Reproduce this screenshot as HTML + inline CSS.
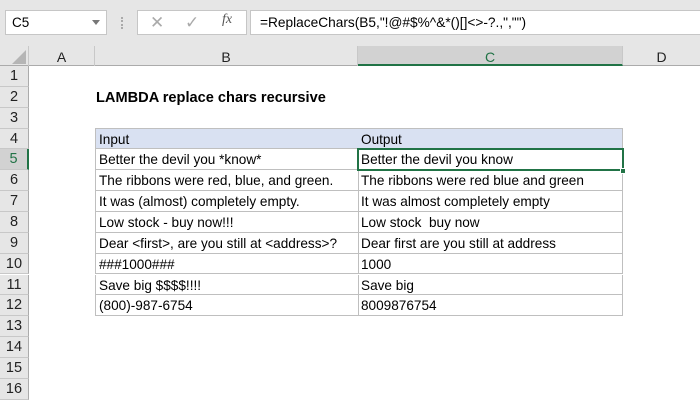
<!DOCTYPE html>
<html><head><style>
*{margin:0;padding:0;box-sizing:border-box}
body{width:700px;height:400px;overflow:hidden;background:#fff;font-family:"Liberation Sans",sans-serif;position:relative}
.a{position:absolute}
.top{left:0;top:0;width:700px;height:46px;background:#e6e6e6}
.box{background:#fff;border:1px solid #c6c6c6}
.hdr{left:0;top:46px;width:700px;height:20px;background:#e6e6e6;border-bottom:1px solid #ababab}
.ch{top:46px;height:20px;font-size:14px;line-height:22px;text-align:center;color:#222;border-right:1px solid #c8c8c8}
.rh{left:0;width:29px;background:#e6e6e6;border-bottom:1px solid #c8c8c8;border-right:1px solid #ababab;font-size:14.5px;text-align:center;color:#222}
.c{font-size:13.6px;color:#000;padding-left:3px;padding-top:2px;white-space:nowrap;border-bottom:1px solid #bfbfbf;border-right:1px solid #bfbfbf}
</style></head><body>
<div class="a top"></div>
<div class="a box" style="left:5px;top:10px;width:102px;height:25px;font-size:13.5px;line-height:23px;padding-left:6px">C5<span style="position:absolute;right:6px;top:9px;border:4px solid transparent;border-top:5px solid #777"></span></div>
<div class="a" style="left:121px;top:17px;width:2px;height:12px;border-left:2px dotted #aaa"></div>
<div class="a box" style="left:137px;top:10px;width:110px;height:25px"></div>
<div class="a" style="left:150px;top:13px;font-size:17px;color:#aaa">✕</div>
<div class="a" style="left:185px;top:13px;font-size:17px;color:#aaa">✓</div>
<div class="a" style="left:222px;top:12px;font-size:14px;font-style:italic;font-family:'Liberation Serif',serif;color:#555"><i>fx</i></div>
<div class="a box" style="left:250px;top:10px;width:452px;height:25px;font-size:13.7px;line-height:24px;padding-left:9px">=ReplaceChars(B5,"!@#$%^&amp;*()[]&lt;&gt;-?.,","")</div>
<div class="a hdr"></div>
<div class="a" style="left:12px;top:50px;border:7px solid transparent;border-right-color:#b5b5b5;border-bottom-color:#b5b5b5"></div>
<div class="a ch" style="left:0;width:29px"></div>
<div class="a ch" style="left:29px;width:66px">A</div>
<div class="a ch" style="left:95px;width:263px">B</div>
<div class="a ch" style="left:358px;width:265px;background:#d2d2d2;color:#217346;border-bottom:2px solid #217346">C</div>
<div class="a ch" style="left:623px;width:77px;border-right:none">D</div>
<div id="rows"></div>
<div class="a" style="left:96px;top:90px;font-size:14.6px;font-weight:bold">LAMBDA replace chars recursive</div>
<script>
var B=["Input","Better the devil you *know*","The ribbons were red, blue, and green.","It was (almost) completely empty.","Low stock - buy now!!!","Dear &lt;first&gt;, are you still at &lt;address&gt;?","###1000###","Save big $$$$!!!!","(800)-987-6754"];
var C=["Output","Better the devil you know","The ribbons were red blue and green","It was almost completely empty","Low stock&nbsp; buy now","Dear first are you still at address","1000","Save big","8009876754"];
var h="",H=20.85;
for(var r=1;r<=16;r++){var t=66+(r-1)*H;
h+='<div class="a rh" style="top:'+t+'px;height:'+H+'px;line-height:'+(H+1)+'px;'+(r==5?'background:#d2d2d2;color:#217346;border-right:2px solid #217346':'')+'">'+r+'</div>';
if(r>=4&&r<=12){var i=r-4,bg=i==0?'background:#d9e1f2;':'';var bt=i==0?'border-top:1px solid #bfbfbf;':'';
h+='<div class="a c" style="'+bg+bt+'left:95px;width:264px;border-left:1px solid #bfbfbf;top:'+(i==0?t-1:t)+'px;height:'+(i==0?H+1:H)+'px;line-height:'+(H-2)+'px">'+B[i]+'</div>';
h+='<div class="a c" style="'+bg+bt+'left:358px;width:265px;top:'+(i==0?t-1:t)+'px;height:'+(i==0?H+1:H)+'px;line-height:'+(H-2)+'px">'+C[i]+'</div>';}}
var t5=66+4*H;
h+='<div class="a" style="left:357px;top:'+(t5-1)+'px;width:267px;height:'+(H+2)+'px;border:2px solid #217346"></div>';
h+='<div class="a" style="left:620px;top:'+(t5+H-2)+'px;width:6px;height:6px;background:#217346;border:1px solid #fff"></div>';
document.getElementById("rows").innerHTML=h;
</script>
</body></html>
